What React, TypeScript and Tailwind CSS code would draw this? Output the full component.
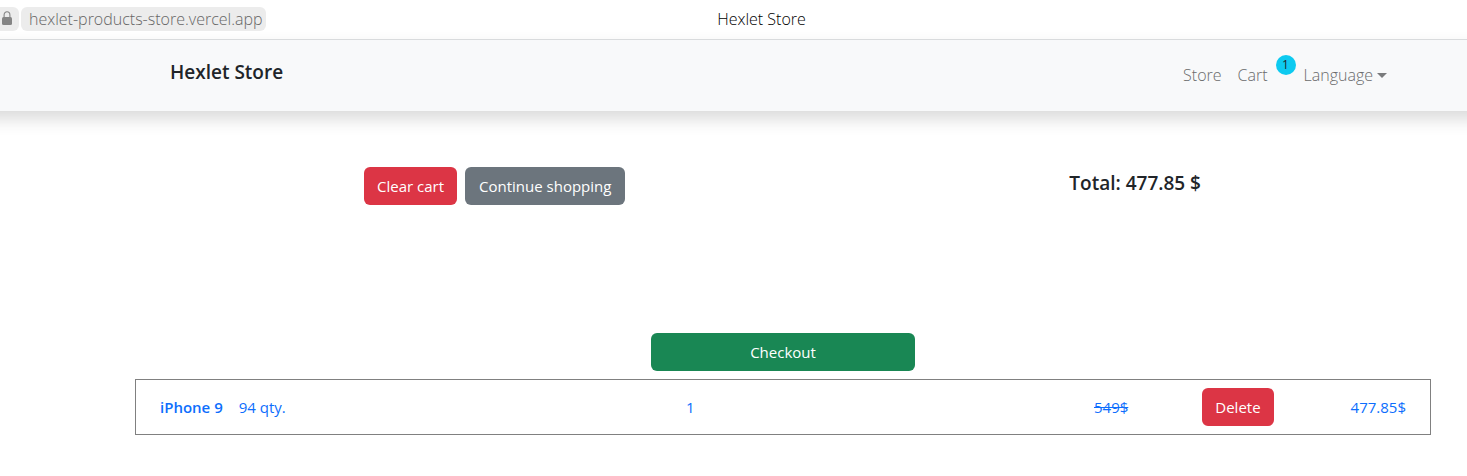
import React from "react";

const button = "h-[38px] rounded-md text-[15px] leading-6 text-white";

function AddressBar() {
  return (
    <div className="flex h-10 items-center border-b border-[#dee0e2] bg-white pb-px text-base font-light">
      <div className="flex flex-1 items-center gap-[2px] pr-14">
        <span className="flex h-6 w-[19px] items-center rounded-r-md bg-[#ececec] pl-[2px]">
          <svg width="10" height="14" viewBox="0 0 10 14" className="mb-[2px]" aria-hidden="true">
            <path d="M2.1 7V4a2.9 3.2 0 0 1 5.8 0v3" fill="none" stroke="#858585" strokeWidth="1.1" />
            <rect x="0" y="6" width="10" height="8" rx="1.5" fill="#858585" />
          </svg>
        </span>
        <span className="flex h-6 items-center rounded-md bg-[#ececec] pr-1 pl-2 text-[#666]">
          hexlet-products-store.vercel.app
        </span>
      </div>
      <span className="text-black">Hexlet Store</span>
      <div className="flex-1" />
    </div>
  );
}

function Navbar() {
  return (
    <nav className="-mx-6 flex h-[71px] items-center justify-between bg-[#f8f9fa] pr-[104px] pl-[194px] shadow-[0_8px_16px_rgba(0,0,0,0.15)]">
      <a href="#store" className="pb-[6px] text-[19px] font-semibold text-[#212529]">Hexlet Store</a>
      <div className="flex items-center gap-4 pb-px text-base font-light text-[#6a6b6c]">
        <a href="#store">Store</a>
        <a href="#cart" className="flex items-center gap-2">
          Cart
          <span className="mb-5 flex size-5 items-center justify-center rounded-full bg-[#0dcaf0] text-xs font-normal text-[#212529]">1</span>
        </a>
        <button className="-ml-2 flex items-center gap-1">
          Language
          <span className="border-x-[5px] border-t-[5px] border-x-transparent border-t-[#7a7b7c]" />
        </button>
      </div>
    </nav>
  );
}

export default function App() {
  return (
    <div className="min-h-screen overflow-x-hidden bg-white font-['Open_Sans',sans-serif] text-[#212529]">
      <AddressBar />
      <Navbar />
      <main className="pt-14 pr-9 pl-[135px]">
        <div className="flex items-start justify-between pr-[230px] pl-[229px]">
          <div className="flex gap-2">
            <button className={`${button} bg-[#dc3545] px-[13px]`}>Clear cart</button>
            <button className={`${button} bg-[#6c757d] px-[14px]`}>Continue shopping</button>
          </div>
          <h2 className="pt-1 text-[19px] leading-6 font-semibold">Total: 477.85 $</h2>
        </div>
        <div className="flex justify-center pt-32">
          <button className={`${button} w-[264px] bg-[#198754]`}>Checkout</button>
        </div>
        <div className="mt-2 flex h-14 items-center border border-[#808080] px-6 text-[15px] text-[#0d6efd]">
          <a href="#product" className="w-[526px]"><b className="mr-4 font-semibold">iPhone 9</b>94 qty.</a>
          <span>1</span>
          <s className="ml-auto">549$</s>
          <button className={`${button} mr-[77px] ml-[74px] bg-[#dc3545] px-[13px]`}>Delete</button>
          <span>477.85$</span>
        </div>
      </main>
    </div>
  );
}
